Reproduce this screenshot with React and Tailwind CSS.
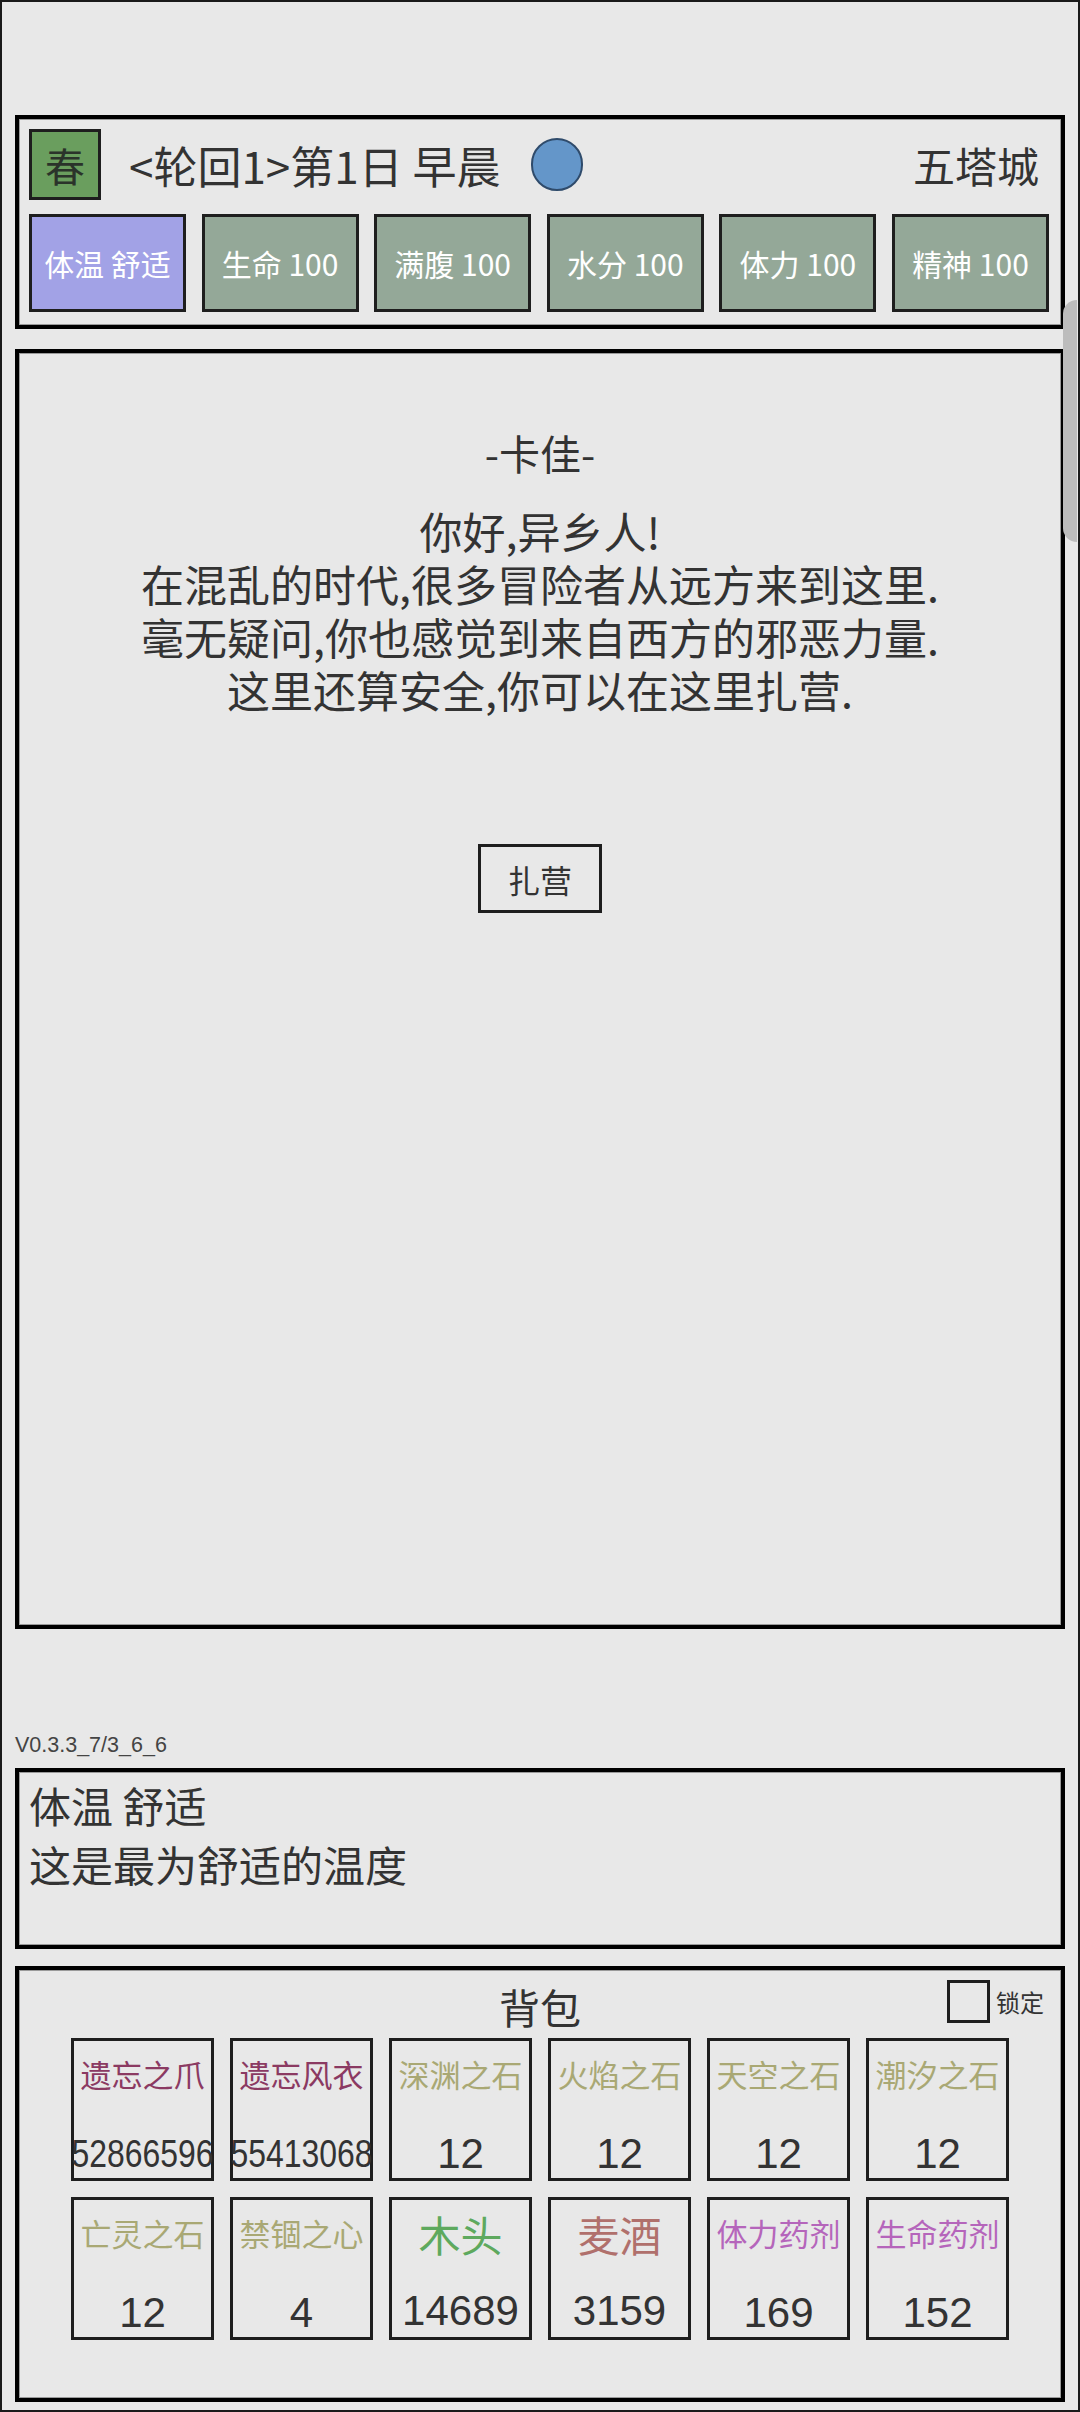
import React from "react";

const CJK = "font-['Noto_Sans_CJK_SC','Noto_Sans',sans-serif]";

const stats = [
  { label: "体温 舒适", bg: "bg-[#a2a2e6]" },
  { label: "生命 100", bg: "bg-[#94a898]" },
  { label: "满腹 100", bg: "bg-[#94a898]" },
  { label: "水分 100", bg: "bg-[#94a898]" },
  { label: "体力 100", bg: "bg-[#94a898]" },
  { label: "精神 100", bg: "bg-[#94a898]" },
];

const items = [
  { name: "遗忘之爪", color: "text-[#8b3a62]", count: "52866596", squeeze: true },
  { name: "遗忘风衣", color: "text-[#8b3a62]", count: "55413068", squeeze: true },
  { name: "深渊之石", color: "text-[#a9a874]", count: "12" },
  { name: "火焰之石", color: "text-[#a9a874]", count: "12" },
  { name: "天空之石", color: "text-[#a9a874]", count: "12" },
  { name: "潮汐之石", color: "text-[#a9a874]", count: "12" },
  { name: "亡灵之石", color: "text-[#a9a874]", count: "12" },
  { name: "禁锢之心", color: "text-[#a9a874]", count: "4" },
  { name: "木头", color: "text-[#5ea95e]", count: "14689", big: true },
  { name: "麦酒", color: "text-[#b0706c]", count: "3159", big: true },
  { name: "体力药剂", color: "text-[#b565bb]", count: "169" },
  { name: "生命药剂", color: "text-[#b565bb]", count: "152" },
];

function Panel({ className = "", children }) {
  return (
    <div
      className={`relative w-[1050px] border-4 border-black bg-[#e8e8e8] shadow-[inset_0_0_0_1px_#9a9a9a] ${className}`}
    >
      {children}
    </div>
  );
}

export default function App() {
  return (
    <div
      className={`relative w-[1080px] h-[2412px] overflow-hidden border-2 border-[#1a1a1a] bg-[#e8e8e8] text-[#333] ${CJK}`}
    >
      {/* scrollbar overlay */}
      <div className="absolute right-[1px] top-[298px] w-[14px] h-[242px] rounded-l-full bg-[#bcbcbc] z-20" />

      <div className="flex flex-col items-start pl-[13px]">
        {/* Header */}
        <Panel className="mt-[113px] h-[214px] pl-[10px] pr-[8px] pt-[10px]">
          <div className="flex items-center h-[71px]">
            <div className="w-[72px] h-[71px] border-[3px] border-[#1e1e1e] bg-[#6a9e5e] flex items-center justify-center text-[40px] leading-none text-[#2a332a]">
              春
            </div>
            <div className="ml-[28px] text-[44px] leading-none whitespace-nowrap">
              &lt;轮回1&gt;第1日 早晨
            </div>
            <div className="ml-[30px] w-[52px] h-[53px] rounded-full bg-[#6496c9] border-2 border-[#2f4b6b]" />
            <div className="ml-auto mr-[14px] text-[42px] leading-none">五塔城</div>
          </div>
          <div className="mt-[14px] grid grid-cols-[repeat(6,157px)] gap-x-[15.6px] w-[1021px]">
            {stats.map((s) => (
              <div
                key={s.label}
                className={`h-[98px] border-[3px] border-[#1e1e1e] ${s.bg} flex items-center justify-center text-white text-[30px] leading-none whitespace-nowrap`}
              >
                {s.label}
              </div>
            ))}
          </div>
        </Panel>

        {/* Main dialogue */}
        <Panel className="mt-[20px] h-[1280px]">
          <div className="flex flex-col items-center pt-[72px]">
            <div className="text-[41px] leading-[54px]">-卡佳-</div>
            <div className="mt-[25px] text-[43px] leading-[53px] text-center">
              <p>你好,异乡人!</p>
              <p>在混乱的时代,很多冒险者从远方来到这里.</p>
              <p>毫无疑问,你也感觉到来自西方的邪恶力量.</p>
              <p>这里还算安全,你可以在这里扎营.</p>
            </div>
            <div className="mt-[128px] w-[124px] h-[69px] border-[3px] border-[#1e1e1e] flex items-center justify-center text-[32px] leading-none">
              扎营
            </div>
          </div>
        </Panel>

        {/* version */}
        <div className="mt-[104px] h-[24px] font-['Liberation_Sans',sans-serif] text-[21.5px] leading-[24px] text-[#444]">
          V0.3.3_7/3_6_6
        </div>

        {/* Info */}
        <Panel className="mt-[11px] h-[181px] pl-[10px] pt-[3px]">
          <div className="text-[42px] leading-[59px]">体温 舒适</div>
          <div className="text-[42px] leading-[59px]">这是最为舒适的温度</div>
        </Panel>

        {/* Backpack */}
        <Panel className="mt-[17px] h-[436px] pt-[9px]">
          <div className="absolute top-[10px] right-[17px] flex items-center">
            <div className="w-[43px] h-[43px] border-[3px] border-[#1e1e1e]" />
            <div className="ml-[6px] text-[24px] leading-none">锁定</div>
          </div>
          <div className="text-center text-[41px] leading-[54px]">背包</div>
          <div className="mt-[5px] grid grid-cols-[repeat(6,143px)] gap-[16px] justify-center">
            {items.map((it) => (
              <div
                key={it.name}
                className="h-[143px] border-[3px] border-[#1e1e1e] flex flex-col items-center overflow-visible"
              >
                <div
                  className={`${it.color} whitespace-nowrap ${
                    it.big ? "mt-[12px] text-[42px] leading-[44px]" : "mt-[13px] text-[31px] leading-[40px]"
                  }`}
                >
                  {it.name}
                </div>
                <div
                  className={`${it.big ? "mt-[33px]" : "mt-[38px]"} font-['Liberation_Sans',sans-serif] text-[#333] whitespace-nowrap ${
                    it.squeeze ? "text-[38px] leading-[44px] scale-x-[0.84]" : "text-[42px] leading-[44px]"
                  }`}
                >
                  {it.count}
                </div>
              </div>
            ))}
          </div>
        </Panel>
      </div>
    </div>
  );
}
